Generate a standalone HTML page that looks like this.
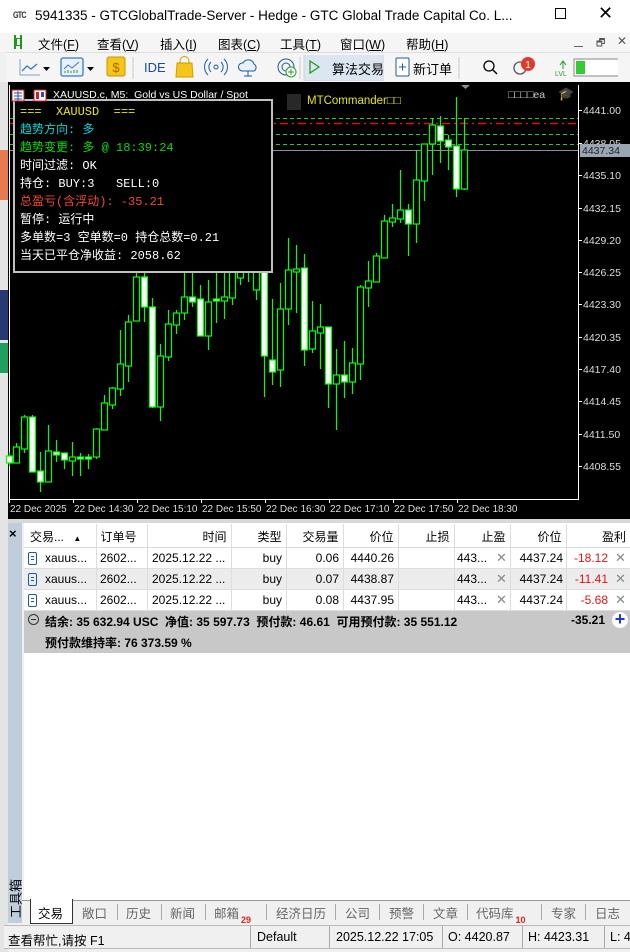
<!DOCTYPE html>
<html><head><meta charset="utf-8"><style>
*{margin:0;padding:0;box-sizing:border-box}
body{width:630px;height:952px;overflow:hidden;background:#f0f0f0;font-family:"Liberation Sans","Noto Sans CJK SC",sans-serif;position:relative;font-size:12px;color:#000}
.a{position:absolute;white-space:nowrap}
.mono{font-family:"Liberation Mono","Noto Sans CJK SC",monospace}
.tb{position:absolute;top:903px;font-size:12.5px;color:#666}
.sp{position:absolute;top:904px;height:16px;border-left:1px solid #aaa}
</style></head><body>
<div class="a" style="left:0;top:0;width:630px;height:33px;background:#fff"></div>
<div class="a" style="left:13px;top:10px;font-size:9px;font-weight:bold;color:#333;letter-spacing:-1px;transform:scaleX(0.8);transform-origin:left">GTC</div>
<div class="a" style="left:35px;top:8px;font-size:13.5px">5941335 - GTCGlobalTrade-Server - Hedge - GTC Global Trade Capital Co. L...</div>
<div class="a" style="left:555px;top:8px;width:11px;height:11px;border:1px solid #000"></div>
<div class="a" style="left:598px;top:3px;font-size:18px">✕</div>
<div class="a" style="left:0;top:33px;width:630px;height:19px;background:#f5f5f5"></div>
<div class="a" style="left:14px;top:35px;width:8px;height:14px;border:2px solid #1a9a1a;border-top:none;border-bottom:none"></div>
<div class="a" style="left:16px;top:38px;width:5px;height:8px;border:1.5px solid #1a9a1a"></div>
<div class="a" style="left:38px;top:34px;font-size:12.5px">文件(<u>F</u>)</div>
<div class="a" style="left:97px;top:34px;font-size:12.5px">查看(<u>V</u>)</div>
<div class="a" style="left:160px;top:34px;font-size:12.5px">插入(<u>I</u>)</div>
<div class="a" style="left:218px;top:34px;font-size:12.5px">图表(<u>C</u>)</div>
<div class="a" style="left:280px;top:34px;font-size:12.5px">工具(<u>T</u>)</div>
<div class="a" style="left:340px;top:34px;font-size:12.5px">窗口(<u>W</u>)</div>
<div class="a" style="left:406px;top:34px;font-size:12.5px">帮助(<u>H</u>)</div>
<div class="a" style="left:574px;top:46px;width:9px;height:1px;background:#666"></div>
<div class="a" style="left:596px;top:36px;font-size:10px;color:#555">🗗</div>
<div class="a" style="left:617px;top:34px;font-size:12px;color:#555">✕</div>
<div class="a" style="left:6px;top:52px;width:624px;height:30px;background:#f5f5f5;border-top:1px solid #ddd"></div>
<svg class="a" style="left:18px;top:55px" width="600" height="26">
<path d="M2 4V20H22" stroke="#8aa0c0" fill="none"/><path d="M4 16l5-5 4 3 6-5" stroke="#3a78c8" stroke-width="1.3" fill="none"/>
<path d="M25 12h7l-3.5 4z" fill="#000"/>
<rect x="43" y="3" width="22" height="18" rx="2" fill="#e8f0fa" stroke="#3a78c8" stroke-width="1.3"/><path d="M46 14l4-4 4 3 7-6" stroke="#3a78c8" fill="none"/><path d="M47 18v-2M50 18v-3M53 18v-2M56 18v-3M59 18v-3" stroke="#2a9a2a"/>
<path d="M69 12h7l-3.5 4z" fill="#000"/>
<rect x="89" y="2" width="18" height="19" rx="2" fill="#f5c518" stroke="#c8940a"/><text x="98" y="17" font-size="13" text-anchor="middle" fill="#a86a00" font-family="Liberation Sans">$</text>
<line x1="115" y1="2" x2="115" y2="24" stroke="#ccc"/>
<text x="126" y="17" font-size="13" fill="#1a4aa0" font-family="Liberation Sans">IDE</text>
<path d="M159 8h15l1 14h-17z" fill="#f5c518" stroke="#d0a000"/><path d="M162 9v-3a4.5 4.5 0 0 1 9 0v3" stroke="#d0a000" fill="none"/>
<circle cx="198" cy="12" r="2" fill="none" stroke="#1a5aa0"/><path d="M193 7a7 7 0 0 0 0 10M203 7a7 7 0 0 1 0 10M190 4a11 11 0 0 0 0 16M206 4a11 11 0 0 1 0 16" stroke="#1a5aa0" fill="none"/>
<path d="M224 16a4 4 0 0 1 1-8 6 6 0 0 1 11 1 4 4 0 0 1 0 7z" fill="#e8f0fa" stroke="#1a5aa0"/><path d="M230 16v5M226 21h8" stroke="#1a5aa0"/>
<circle cx="268" cy="12" r="8" fill="none" stroke="#1a5aa0"/><circle cx="268" cy="12" r="4" fill="none" stroke="#1a5aa0"/><circle cx="273" cy="17" r="5" fill="#fff" stroke="#2a9a2a"/><path d="M273 14v6M270 17h6" stroke="#2a9a2a"/>
<line x1="282" y1="2" x2="282" y2="24" stroke="#ccc"/>
<rect x="286" y="-1" width="79" height="27" fill="#dce6f0" stroke="#c8d4e0"/>
<path d="M292 6l9 6-9 6z" fill="none" stroke="#2a9a2a" stroke-width="1.3"/>
<rect x="378" y="3" width="13" height="18" rx="1" fill="#fff" stroke="#1a5aa0"/><path d="M381 12h7M384.5 8.5v7" stroke="#1a5aa0"/>
<line x1="441" y1="2" x2="441" y2="24" stroke="#ccc"/>
<circle cx="471" cy="11" r="5" fill="none" stroke="#000" stroke-width="1.3"/><path d="M475 15l4 4" stroke="#000" stroke-width="1.5"/>
<circle cx="502" cy="13" r="6" fill="none" stroke="#555" stroke-width="1.3"/><circle cx="510" cy="9" r="7" fill="#e03a2a"/><text x="510" y="13" font-size="10" fill="#fff" text-anchor="middle" font-family="Liberation Sans">1</text>
<path d="M542 10l3-4 3 4M545 6v8" stroke="#2a9a2a" fill="none"/><text x="537" y="21" font-size="7" fill="#2a9a2a" font-family="Liberation Sans">LVL</text>
<rect x="556" y="4" width="49" height="17" fill="#fff" stroke="#888"/><rect x="558" y="6" width="9" height="13" fill="#33cc33"/>
</svg>
<div class="a" style="left:332px;top:59px;font-size:13px">算法交易</div>
<div class="a" style="left:413px;top:59px;font-size:13px">新订单</div>
<div class="a" style="left:0;top:82px;width:8px;height:870px;background:#e4e4e4"></div>
<div class="a" style="left:0;top:150px;width:8px;height:50px;background:#e87a50"></div>
<div class="a" style="left:0;top:290px;width:8px;height:50px;background:#283870"></div>
<div class="a" style="left:0;top:343px;width:8px;height:30px;background:#20a060"></div>
<div class="a" style="left:8px;top:82px;width:622px;height:437px;background:#000"></div>
<svg class="a" style="left:0;top:0" width="630" height="520">
<g stroke="#fff" stroke-width="1"><line x1="9.5" y1="85" x2="9.5" y2="499"/><line x1="9" y1="499.5" x2="578" y2="499.5"/><line x1="578.5" y1="85" x2="578.5" y2="500"/></g>
<g stroke="#fff"><line x1="9.5" y1="499" x2="9.5" y2="503"/><line x1="73.5" y1="499" x2="73.5" y2="503"/><line x1="137.5" y1="499" x2="137.5" y2="503"/><line x1="201.5" y1="499" x2="201.5" y2="503"/><line x1="265.5" y1="499" x2="265.5" y2="503"/><line x1="329.5" y1="499" x2="329.5" y2="503"/><line x1="393.5" y1="499" x2="393.5" y2="503"/><line x1="457.5" y1="499" x2="457.5" y2="503"/>
<line x1="578" y1="110.5" x2="582" y2="110.5"/><line x1="578" y1="143.5" x2="582" y2="143.5"/><line x1="578" y1="175.5" x2="582" y2="175.5"/><line x1="578" y1="208.5" x2="582" y2="208.5"/><line x1="578" y1="240.5" x2="582" y2="240.5"/><line x1="578" y1="272.5" x2="582" y2="272.5"/><line x1="578" y1="304.5" x2="582" y2="304.5"/><line x1="578" y1="337.5" x2="582" y2="337.5"/><line x1="578" y1="369.5" x2="582" y2="369.5"/><line x1="578" y1="401.5" x2="582" y2="401.5"/><line x1="578" y1="434.5" x2="582" y2="434.5"/><line x1="578" y1="466.5" x2="582" y2="466.5"/></g>
<g stroke="#22cc22" stroke-dasharray="4,3"><line x1="10" y1="118.5" x2="578" y2="118.5"/><line x1="10" y1="134.5" x2="578" y2="134.5"/><line x1="10" y1="144.5" x2="578" y2="144.5"/></g>
<line x1="10" y1="123.5" x2="578" y2="123.5" stroke="#e01010" stroke-width="1.5" stroke-dasharray="8,4,2,4"/>
<line x1="10" y1="150.5" x2="578" y2="150.5" stroke="#8890a0"/>
<path d="M461 85h9l-4.5 4z" fill="#8890a0"/>
<g id="c" stroke="#00ff00" stroke-width="1.2"></g>
<g font-family="Liberation Sans" font-size="10.5" fill="#ddd">
<text x="583" y="114">4441.00</text><text x="583" y="147">4438.05</text><text x="583" y="179">4435.10</text><text x="583" y="212">4432.15</text><text x="583" y="244">4429.20</text><text x="583" y="276">4426.25</text><text x="583" y="308">4423.30</text><text x="583" y="341">4420.35</text><text x="583" y="373">4417.40</text><text x="583" y="405">4414.45</text><text x="583" y="438">4411.50</text><text x="583" y="470">4408.55</text>
</g>
<g font-family="Liberation Sans" font-size="10" fill="#ddd">
<text x="10" y="512">22 Dec 2025</text><text x="74" y="512">22 Dec 14:30</text><text x="138" y="512">22 Dec 15:10</text><text x="202" y="512">22 Dec 15:50</text><text x="266" y="512">22 Dec 16:30</text><text x="330" y="512">22 Dec 17:10</text><text x="394" y="512">22 Dec 17:50</text><text x="458" y="512">22 Dec 18:30</text>
</g>
<rect x="580" y="144" width="50" height="13" fill="#9aa6b4"/><text x="582" y="154" font-family="Liberation Sans" font-size="10.5" fill="#222">4437.34</text>
</svg>
<div class="a" style="left:13px;top:99px;width:260px;height:174px;background:#000;border:2px solid #c0c0c0"></div>
<div class="a mono" style="left:20px;top:103px;font-size:12px;line-height:18px;color:#fff">
<div style="color:#e8e800">===&nbsp; XAUUSD &nbsp;===</div>
<div style="color:#00d8d8">趋势方向: 多</div>
<div style="color:#00e000">趋势变更: 多 @ 18:39:24</div>
<div>时间过滤: OK</div>
<div>持仓: BUY:3 &nbsp;&nbsp;SELL:0</div>
<div style="color:#f04a30">总盈亏(含浮动): -35.21</div>
<div>暂停: 运行中</div>
<div>多单数=3 空单数=0 持仓总数=0.21</div>
<div>当天已平仓净收益: 2058.62</div>
</div>
<svg class="a" style="left:11px;top:89px" width="40" height="14"><rect x="1" y="1" width="12" height="11" fill="#fff" stroke="#d02020"/><path d="M3 4h8M3 7h8M3 10h8M7 2v10" stroke="#2050c0"/><rect x="23" y="1" width="12" height="11" fill="#fff" stroke="#d02020"/><rect x="25" y="3" width="3" height="7" fill="#d02020"/><rect x="30" y="3" width="3" height="5" fill="#2050c0"/></svg>
<div class="a" style="left:53px;top:89px;font-size:10.5px;color:#fff">XAUUSD.c, M5:&nbsp; Gold vs US Dollar / Spot</div>
<div class="a" style="left:287px;top:94px;width:14px;height:16px;background:#282828"></div>
<div class="a" style="left:307px;top:95px;font-size:11.5px;color:#e8e800">MTCommander□□</div>
<div class="a" style="left:508px;top:89px;font-size:10.5px;color:#ccc">□□□□ea</div>
<div class="a" style="left:558px;top:86px;font-size:13px;color:#3a9ad8">🎓</div>
<div class="a" style="left:8px;top:519px;width:622px;height:4px;background:#d8d8d8"></div>
<div class="a" style="left:8px;top:523px;width:14px;height:400px;background:#c0cedc"></div>
<div class="a" style="left:9px;top:526px;font-size:13px;font-weight:bold">×</div>
<div class="a" style="left:-5px;top:889px;font-size:13px;transform:rotate(-90deg);transform-origin:center;width:40px;text-align:center">工具箱</div>
<div class="a" style="left:24px;top:523px;width:606px;height:380px;background:#fff"></div>
<table class="a" style="left:24px;top:524px;border-collapse:collapse;font-size:12px;table-layout:fixed;width:606px">
<colgroup><col style="width:72px"><col style="width:51px"><col style="width:84px"><col style="width:55px"><col style="width:57px"><col style="width:55px"><col style="width:56px"><col style="width:56px"><col style="width:56px"><col style="width:64px"></colgroup>
<tr style="height:24px"><td style="padding-left:6px">交易... <span style="font-size:8px;margin-left:6px">▲</span></td><td style="border-left:1px solid #ddd;padding-left:4px">订单号</td><td style="border-left:1px solid #ddd;text-align:right;padding-right:4px">时间</td><td style="border-left:1px solid #ddd;text-align:right;padding-right:4px">类型</td><td style="border-left:1px solid #ddd;text-align:right;padding-right:4px">交易量</td><td style="border-left:1px solid #ddd;text-align:right;padding-right:4px">价位</td><td style="border-left:1px solid #ddd;text-align:right;padding-right:4px">止损</td><td style="border-left:1px solid #ddd;text-align:right;padding-right:4px">止盈</td><td style="border-left:1px solid #ddd;text-align:right;padding-right:4px">价位</td><td style="border-left:1px solid #ddd;text-align:right;padding-right:4px">盈利</td></tr>
</table>
<div id="rows"></div>
<div class="a" style="left:24px;top:611px;width:606px;height:42px;background:#c8c8c8"></div>
<div class="a" style="left:28px;top:614px;width:11px;height:11px;border:1px solid #333;border-radius:50%"></div>
<div class="a" style="left:31px;top:619px;width:5px;height:1px;background:#333"></div>
<div class="a" style="left:45px;top:613px;font-size:12px;font-weight:bold">结余: 35 632.94 USC&nbsp; 净值: 35 597.73&nbsp; 预付款: 46.61&nbsp; 可用预付款: 35 551.12</div>
<div class="a" style="left:571px;top:613px;font-size:12px;font-weight:bold">-35.21</div>
<div class="a" style="left:612px;top:612px;width:16px;height:16px;background:#fff;border-radius:50%;color:#1a3ad0;font-size:18px;line-height:15px;text-align:center;font-weight:bold">+</div>
<div class="a" style="left:45px;top:634px;font-size:12px;font-weight:bold">预付款维持率: 76 373.59 %</div>
<div class="a" style="left:22px;top:900px;width:608px;height:24px;background:#f0f0f0;border-top:1px solid #999"></div>
<div class="a" style="left:30px;top:899px;width:43px;height:25px;background:#fff;border:1px solid #333;border-top:none"></div>
<div class="a" style="left:38px;top:903px;font-size:12.5px">交易</div>
<div class="tb" style="left:82px">敞口</div><div class="sp" style="left:117px"></div>
<div class="tb" style="left:126px">历史</div><div class="sp" style="left:161px"></div>
<div class="tb" style="left:170px">新闻</div><div class="sp" style="left:205px"></div>
<div class="tb" style="left:214px">邮箱<span style="color:#e02020;font-size:9px;font-weight:bold;position:relative;top:5px;margin-left:2px">29</span></div><div class="sp" style="left:266px"></div>
<div class="tb" style="left:276px">经济日历</div><div class="sp" style="left:335px"></div>
<div class="tb" style="left:345px">公司</div><div class="sp" style="left:379px"></div>
<div class="tb" style="left:389px">预警</div><div class="sp" style="left:423px"></div>
<div class="tb" style="left:433px">文章</div><div class="sp" style="left:467px"></div>
<div class="tb" style="left:476px">代码库<span style="color:#e02020;font-size:9px;font-weight:bold;position:relative;top:5px;margin-left:2px">10</span></div><div class="sp" style="left:541px"></div>
<div class="tb" style="left:551px">专家</div><div class="sp" style="left:585px"></div>
<div class="tb" style="left:595px">日志</div>
<div class="a" style="left:4px;top:925px;width:626px;height:24px;background:#f0f0f0;border-top:1px solid #bbb;border-bottom:1px solid #bbb"></div>
<div class="a" style="left:8px;top:930px;font-size:12.5px">查看帮忙,请按 F1</div>
<div class="a" style="left:250px;top:926px;height:22px;border-left:1px solid #aaa"></div>
<div class="a" style="left:257px;top:930px;font-size:12.5px">Default</div>
<div class="a" style="left:329px;top:926px;height:22px;border-left:1px solid #aaa"></div>
<div class="a" style="left:336px;top:930px;font-size:12.5px">2025.12.22 17:05</div>
<div class="a" style="left:442px;top:926px;height:22px;border-left:1px solid #aaa"></div>
<div class="a" style="left:448px;top:930px;font-size:12.5px">O: 4420.87</div>
<div class="a" style="left:522px;top:926px;height:22px;border-left:1px solid #aaa"></div>
<div class="a" style="left:528px;top:930px;font-size:12.5px">H: 4423.31</div>
<div class="a" style="left:604px;top:926px;height:22px;border-left:1px solid #aaa"></div>
<div class="a" style="left:610px;top:930px;font-size:12.5px">L: 4</div>
<script>
var C=[[9,452,466,456,463,1],[16,443,463,447,463,0],[24,415,453,417,449,0],[32,415,472,417,472,1],[40,452,492,471,482,1],[48,425,482,451,482,0],[56,440,462,452,455,1],[64,453,469,453,460,1],[72,442,476,457,461,0],[80,453,476,457,459,1],[88,454,469,457,459,1],[96,428,459,429,457,0],[104,395,430,403,430,0],[112,387,409,388,405,0],[120,330,396,364,389,0],[128,315,382,322,366,0],[136,265,321,277,321,0],[144,262,322,277,307,1],[152,298,408,307,407,1],[160,344,421,356,407,0],[168,310,361,324,357,0],[176,310,334,313,325,0],[184,270,320,297,313,0],[192,270,307,297,302,1],[200,285,336,299,336,1],[208,280,350,302,336,0],[216,270,323,299,301,1],[224,270,319,297,301,0],[232,255,305,265,298,0],[240,260,285,268,278,0],[248,255,282,262,270,1],[256,250,300,260,290,0],[264,255,397,265,356,1],[272,299,385,360,372,1],[280,283,387,309,370,0],[288,238,325,270,309,0],[296,245,313,269,272,0],[304,254,366,268,350,1],[312,301,353,331,349,0],[320,304,369,327,333,0],[328,327,408,327,384,1],[336,349,430,375,384,0],[344,341,398,375,382,1],[352,348,394,363,382,0],[360,285,380,287,364,0],[368,261,307,281,288,0],[376,253,282,256,282,0],[384,215,258,221,258,0],[392,204,227,218,222,0],[400,170,223,210,219,0],[408,204,256,210,224,1],[416,150,243,180,224,0],[424,149,201,144,181,0],[432,118,175,125,144,0],[440,116,163,126,141,1],[448,135,170,140,147,1],[456,97,197,146,189,1],[464,118,190,150,189,0]];
var s='';C.forEach(function(c){var x=c[0]+0.5;s+='<line x1="'+x+'" y1="'+c[1]+'" x2="'+x+'" y2="'+c[2]+'"/>';var h=Math.max(c[4]-c[3],2);s+='<rect x="'+(c[0]-2.5)+'" y="'+c[3]+'" width="6" height="'+h+'" fill="'+(c[5]?'#fff':'#000')+'"/>';});
document.getElementById('c').innerHTML=s;
var R=[['0.06','4440.26','-18.12','#fff'],['0.07','4438.87','-11.41','#ececec'],['0.08','4437.95','-5.68','#fff']];
var h='';var cols=[24,96,147,231,286,343,398,454,510,566,630];
R.forEach(function(r,i){var t=548+i*21;h+='<div class="a" style="left:24px;top:'+t+'px;width:606px;height:21px;background:'+r[3]+';border-bottom:1px solid #ddd"></div>';
for(var k=1;k<10;k++)h+='<div class="a" style="left:'+cols[k]+'px;top:'+t+'px;height:21px;border-left:1px solid #ddd"></div>';
var y=t+3;
h+='<div class="a" style="left:28px;top:'+(t+4)+'px;width:9px;height:13px;border:1px solid #1a5aa0;border-radius:2px"></div><div class="a" style="left:31px;top:'+(t+8)+'px;width:3px;height:1px;background:#1a5aa0;box-shadow:0 3px #1a5aa0"></div>';
h+='<div class="a" style="left:45px;top:'+y+'px">xauus...</div><div class="a" style="left:100px;top:'+y+'px">2602...</div><div class="a" style="left:152px;top:'+y+'px">2025.12.22 ...</div>';
h+='<div class="a" style="right:348px;top:'+y+'px">buy</div><div class="a" style="right:291px;top:'+y+'px">'+r[0]+'</div><div class="a" style="right:236px;top:'+y+'px">'+r[1]+'</div>';
h+='<div class="a" style="left:457px;top:'+y+'px">443...</div><div class="a" style="left:496px;top:'+(y-1)+'px;color:#888;font-size:13px">✕</div>';
h+='<div class="a" style="right:67px;top:'+y+'px">4437.24</div><div class="a" style="right:22px;top:'+y+'px;color:#e81010">'+r[2]+'</div><div class="a" style="left:615px;top:'+(y-1)+'px;color:#888;font-size:13px">✕</div>';});
h+='<div class="a" style="left:24px;top:547px;width:606px;height:1px;background:#ddd"></div>';
document.getElementById('rows').innerHTML=h;
</script>
</body></html>
